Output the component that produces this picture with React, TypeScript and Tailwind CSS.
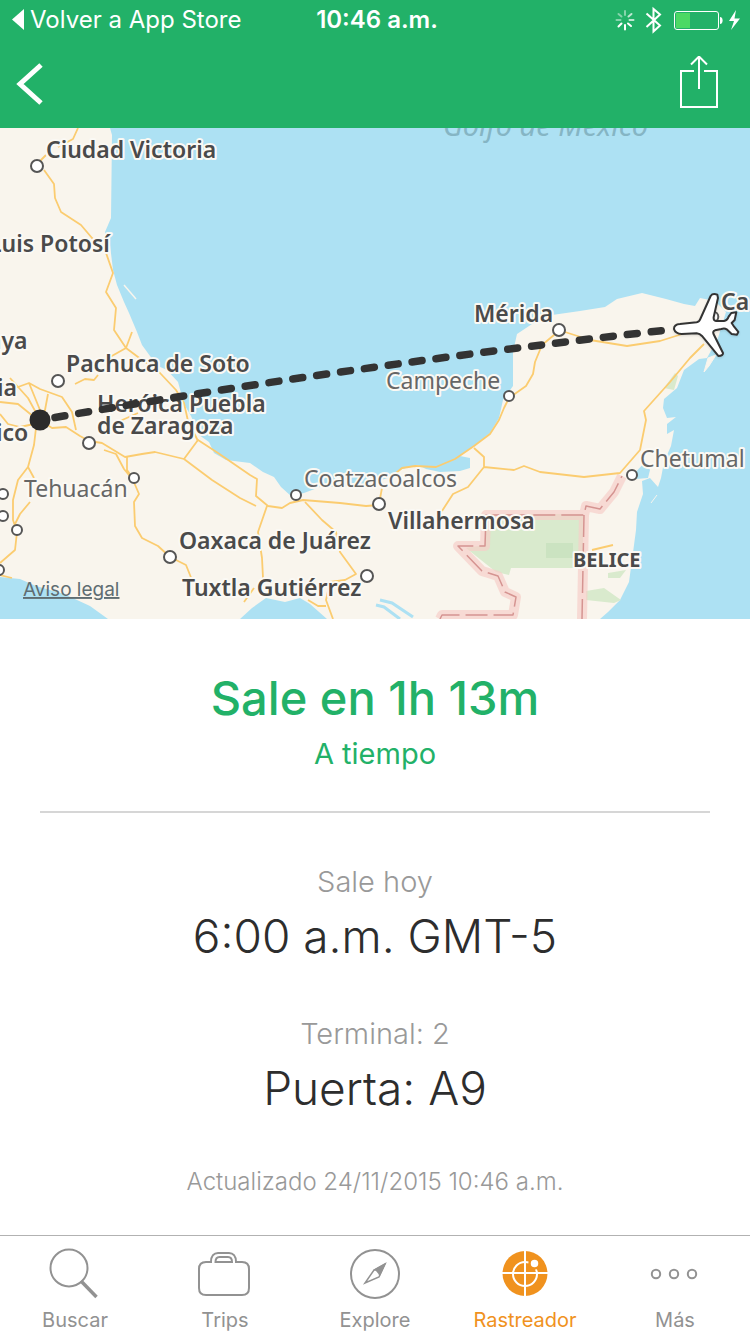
import { useState, type ReactNode } from 'react';
import clsx from 'clsx';

type CityLabel = {
  name: string;
  x: number;
  y: number;
  minor?: boolean;
};

const labels: CityLabel[] = [
  { name: 'Ciudad Victoria', x: 46, y: 158 },
  { name: 'Luis Potosí', x: -11, y: 252 },
  { name: 'aya', x: -12, y: 349 },
  { name: 'Pachuca de Soto', x: 66, y: 372 },
  { name: 'ia', x: -3, y: 396 },
  { name: 'Heróica Puebla', x: 97, y: 412 },
  { name: 'de Zaragoza', x: 97, y: 434 },
  { name: 'ico', x: -4, y: 441 },
  { name: 'Tehuacán', x: 24, y: 497, minor: true },
  { name: 'Oaxaca de Juárez', x: 179, y: 549 },
  { name: 'Tuxtla Gutiérrez', x: 182, y: 596 },
  { name: 'Coatzacoalcos', x: 304, y: 487, minor: true },
  { name: 'Villahermosa', x: 388, y: 529 },
  { name: 'Campeche', x: 386, y: 389, minor: true },
  { name: 'Mérida', x: 474, y: 322 },
  { name: 'Chetumal', x: 640, y: 467, minor: true },
  { name: 'Ca', x: 721, y: 310 },
];

// [x, y, radius]
const towns = [
  [37, 166, 6],
  [58, 381, 6],
  [89, 443, 6],
  [134, 478, 5],
  [17, 530, 5],
  [3, 494, 5],
  [3, 516, 5],
  [-1, 570, 5],
  [170, 557, 6],
  [296, 495, 5],
  [379, 504, 6],
  [367, 576, 6],
  [509, 396, 5],
  [559, 330, 6],
  [632, 475, 5],
];

const roads = [
  'M78 128 L73 139 L58 147 M46 155 L38 163 M44 170 L54 184 L55 198 L61 212 L81 225 L92 238 L105 250 L113 273 L106 292 L116 308 L114 330 L126 348 L110 357 M126 348 L132 332 M126 348 L138 357 L160 373 L176 390 L184 403 L188 421 L198 441',
  'M0 384 L18 387 L29 383 L40 389 L62 397 L72 412 L76 430 M29 383 L40 410 M0 402 L18 404 L34 417 M0 414 L8 424 L20 427 L34 424 M48 394 L45 410 L40 420 M10 378 L28 398 L40 420',
  'M40 420 L52 428 L66 427 L80 436 L89 441 L102 443 L125 457 L142 454 L155 452 L184 459 L198 440 L218 453 L250 475 L257 479 L256 496 L268 506 L282 508 L290 503 L303 500 L340 503 L366 506 L379 505',
  'M184 459 L212 480 L240 498 L256 506 M104 450 L116 454 L124 469 L133 480 L139 494 L134 502 L135 526 L142 538 L158 546 L170 557 L186 565 L192 580 M127 457 L127 470 L132 477',
  'M36 428 L34 445 L28 467 L18 480 L13 500 L13 520 L17 532 L15 550 L0 563 M28 467 L34 478 M30 502 L20 514 L14 526 M0 575 L12 578 M75 384 L85 379 L94 380 L98 375 M120 421 L138 413',
  'M267 506 L258 532 L262 558 L263 578 M305 502 L322 520 L336 532 L340 552 L356 574 L345 580 L330 582 L326 600 L333 619 M308 600 L318 606 L326 606 M254 588 L244 602',
  'M379 504 L382 488 M390 478 L402 468 L415 466 L436 467 L455 459 L474 446 L490 434 L499 420 L504 408 L509 398 L526 386 L533 374 L535 362 L542 345 L554 335 L561 332',
  'M474 448 L484 457 L484 467 L468 487 L453 494 L442 511 M484 467 L514 470 L524 466 L540 472 L584 477 L620 473 L640 450 L646 420 L644 411 L670 382 L690 358 L704 344 M565 332 L590 340 L627 346 L660 341 L698 329 M592 550 L613 545',
];

const coast =
  'M0 128 H110 L112 135 L111 218 L105 232 L110 245 L113 270 L117 285 L124 302 L129 313 L137 332 L142 345 L150 356 L158 366 L167 370 L178 382 L184 404 L191 416 L199 435 L209 442 L214 453 L226 460 L250 463 L263 472 L274 477 L281 487 L291 496 L304 493 L320 487 L360 486 L388 478 L402 469 L418 465 L426 469 L440 472 L460 471 L470 468 L470 458 L460 456 L474 446 L490 433 L499 418 L503 400 L513 386 L513 352 L517 334 L532 324 L552 315 L580 311 L605 307 L617 299 L642 293 L666 299 L684 304 L695 306 L700 298 L715 301 L726 312 L718 338 L707 358 L699 359 L684 370 L677 388 L664 399 L663 408 L667 418 L676 417 L667 424 L667 434 L674 430 L671 446 L664 462 L661 478 L658 487 L650 478 L642 481 L643 494 L637 512 L636 530 L632 560 L629 582 L620 600 L608 612 L600 619 H327 L310 604 L300 598 L285 602 L266 598 L252 608 L240 619 H108 L90 606 L64 594 L36 586 L20 579 L0 577 Z';

const border =
  'M440 619 L442 615 H513 L516 597 L505 592 L498 576 L482 571 L458 546 H485 L486 515 H584 L586 506 L600 509 L614 492 L622 476 M584 515 L582 619';

const tabs: { name: string; icon: ReactNode }[] = [
  {
    name: 'Buscar',
    icon: (
      <>
        <circle cx="22" cy="22" r="18.5" strokeWidth="2" />
        <path d="M34 35 L49.5 51" strokeWidth="3.5" />
      </>
    ),
  },
  {
    name: 'Trips',
    icon: (
      <>
        <path
          d="M14 16 H9 C4.500 16 2 18.500 2 23 V42 C2 46.500 4.500 49 9 49 H45 C49.500 49 52 46.500 52 42 V23 C52 18.500 49.500 16 45 16 H39 C39 10 36 7 32 7 H21 C17 7 14 10 14 16 Z"
          strokeWidth="2"
        />
        <path d="M18.5 16 C18.5 12.5 20 11 22.5 11 H31 C33.5 11 35 12.5 35 16 Z" strokeWidth="2" />
      </>
    ),
  },
  {
    name: 'Explore',
    icon: (
      <>
        <circle cx="28" cy="28" r="24" strokeWidth="2" />
        <path d="M38 18 L27 24 L18 37 L32 31 Z" strokeWidth="1.5" />
        <path d="M39.500 16.500 L26 24 L29 25 L31.500 28 L32.500 31 Z" fill="currentColor" stroke="none" />
      </>
    ),
  },
  {
    name: 'Rastreador',
    icon: (
      <>
        <circle cx="28" cy="27.5" r="22.5" fill="currentColor" stroke="none" />
        <circle cx="28" cy="28" r="12" stroke="#fff" strokeWidth="2" />
        <path d="M28 4 V51 M5 27 H51" stroke="#fff" strokeWidth="2" />
        <circle cx="37.5" cy="17.5" r="5" fill="#fff" strokeWidth="2.5" />
      </>
    ),
  },
  {
    name: 'Más',
    icon: (
      <>
        <circle cx="9" cy="28" r="4.2" strokeWidth="2" />
        <circle cx="27" cy="28" r="4.2" strokeWidth="2" />
        <circle cx="45" cy="28" r="4.2" strokeWidth="2" />
      </>
    ),
  },
];

function StatusBar() {
  return (
    <div className="grid h-10 grid-cols-[1fr_auto_1fr] items-center px-2.5 text-2xl leading-8 text-white">
      <a href="#app-store" className="flex items-center gap-1.5 pl-0.5">
        <svg className="h-6 w-3" viewBox="0 0 12 24" fill="currentColor">
          <path d="M12 1 V22 L0 11.5 Z" />
        </svg>
        Volver a App Store
      </a>
      <time className="pl-1 font-semibold">10:46 a.m.</time>
      <div className="flex items-center justify-end">
        <svg className="h-7 w-32" viewBox="612 6 128 28" fill="none" stroke="currentColor">
          <g strokeWidth="2" strokeLinecap="round">
            <path d="M625 11 V15 M618.5 14 L621.5 16.5 M616.5 20 H620.5" opacity=".45" />
            <path d="M631.5 14 L628.5 16.5 M629.5 20 H633.5" opacity=".7" />
            <path d="M631 26 L628 23.500 M625 25 V29.5 M618.5 26.5 L621.5 23.5" />
          </g>
          <path d="M646.5 13.5 L660 25.5 L653.5 31.5 V9 L660 14.5 L646.5 27" strokeWidth="2" />
          <rect x="674.5" y="11.5" width="44" height="18" rx="2.5" />
          <rect x="676" y="13" width="14" height="15" fill="#4cd964" stroke="none" />
          <path d="M720 17 C723.5 17 723.5 24 720 24 Z" fill="currentColor" stroke="none" />
          <path d="M736 10 L729 21 H734 L731 30 L740 18.5 H734.5 Z" fill="currentColor" stroke="none" />
        </svg>
      </div>
    </div>
  );
}

function FlightMap() {
  return (
    <svg
      className="block h-auto w-full font-['Noto_Sans',sans-serif]"
      viewBox="0 128 750 491"
      role="img"
      aria-label="Mapa del vuelo"
    >
      <rect y="128" width="750" height="491" fill="#ade1f3" />
      <path d={coast} fill="#f9f5ed" />
      <path d="M124 285 L136 299" stroke="#f9f5ed" strokeWidth="1.5" />
      <path d="M708 358 L716 355 L709 366 L704 372 Z M651 503 L657 495" fill="#f9f5ed" stroke="#f9f5ed" />
      <path d="M380 600 L392 603 L413 617 M376 605 L384 607 L400 619" stroke="#ade1f3" strokeWidth="3" fill="none" />
      <path d="M634 474 L645 462 L650 470 L648 478 L636 479 Z" fill="#ade1f3" />
      <g fill="#d9eacd">
        <path d="M487 514 H583 V568 H511 L509 575 L496 572 L466 548 L485 545 Z" />
        <path d="M546 543 H573 V558 H546 Z" fill="#cbe3c1" />
        <path d="M608 573 L626 570 L620 578 L608 578 Z M586 591 L604 588 L621 600 L614 603 L586 600 Z" />
        <path d="M664 388 L675 373 L678 376 L674 390 Z" />
      </g>
      <g fill="none" strokeLinejoin="round">
        <path d={border} stroke="#f7cfc9" strokeWidth="10" opacity=".7" />
        <path d={border} stroke="#d59491" strokeWidth="1.5" strokeDasharray="22 6" />
        {roads.map((d, i) => (
          <path key={i} d={d} stroke="#fbcc70" strokeWidth="1.8" />
        ))}
      </g>
      <g fill="#fff" stroke="#555" strokeWidth="2">
        {towns.map(([x, y, r]) => (
          <circle key={`${x}-${y}`} cx={x} cy={y} r={r} />
        ))}
      </g>
      <text x="443" y="136" fontSize="29" fontStyle="italic" fill="#85b5c4">
        Golfo de México
      </text>
      <g className="[paint-order:stroke]" stroke="#fbf9f4" strokeWidth="4" strokeLinejoin="round">
        {labels.map(({ name, x, y, minor }) => (
          <text
            key={name}
            x={x}
            y={y}
            fontSize="23"
            fontWeight={minor ? 400 : 600}
            fill={minor ? '#666' : '#4a4a4a'}
          >
            {name}
          </text>
        ))}
        <text x="573" y="567" fontSize="20" fontWeight="700" fill="#4a4a4a">
          BELICE
        </text>
      </g>
      <path
        d="M55 417.5 Q357 365 667 330"
        fill="none"
        stroke="#333"
        strokeWidth="7.5"
        strokeLinecap="round"
        strokeDasharray="10 14.1"
      />
      <circle cx="40" cy="420" r="10.5" fill="#2b2b2b" />
      <g transform="translate(500 120) scale(.3333)" strokeLinejoin="round">
        <circle cx="640" cy="590" r="15" fill="#fff" stroke="#555" strokeWidth="6" />
        <path
          className="drop-shadow-md"
          d="M522 627 Q522 613 540 612 L590 607 Q598 606 601 597 L632 528 Q638 519 652 524 L654 534 L641 592 Q640 602 648 603 L672 603 Q682 602 686 590 L694 579 L709 577 L704 600 L695 609 L703 621 L715 636 L711 644 L695 642 L680 628 Q674 624 664 627 L645 631 Q637 634 641 643 L669 699 Q670 707 655 708 L606 648 Q600 641 590 640 L545 642 Q526 641 522 627 Z"
          fill="#fff"
          stroke="#333"
          strokeWidth="6"
        />
      </g>
      <a href="#aviso-legal">
        <text x="23" y="596" fontSize="19" fill="#5f6d72" textDecoration="underline" className="font-['Inter',sans-serif]">
          Aviso legal
        </text>
      </a>
    </svg>
  );
}

function Detail({ label, value }: { label: string; value: string }) {
  return (
    <div className="flex flex-col gap-1">
      <dt className="text-[29px] leading-10 text-[#999]">{label}</dt>
      <dd className="text-[46px] leading-[60px] text-[#2d2d2d]">{value}</dd>
    </div>
  );
}

export default function App() {
  const [active, setActive] = useState('Rastreador');

  return (
    <div className="flex min-h-screen flex-col bg-white font-['Inter',sans-serif]">
      <header className="bg-[#22b168] text-white">
        <StatusBar />
        <div className="flex h-22 items-center justify-between pr-8 pl-4">
          <button type="button" aria-label="Atrás">
            <svg className="h-14 w-7" viewBox="16 56 28 56" fill="none" stroke="currentColor" strokeWidth="5">
              <path d="M41 65 L20 84 L41 103" />
            </svg>
          </button>
          <button type="button" aria-label="Compartir">
            <svg className="h-14 w-10" viewBox="678 56 40 56" fill="none" stroke="currentColor" strokeWidth="2">
              <path d="M694 71 H681 V107 H717 V71 H704 M699 57 V89 M691 64.5 L699 56.5 L707 64.5" />
            </svg>
          </button>
        </div>
      </header>

      <main className="flex-1 text-center">
        <FlightMap />
        <section className="px-10 pt-[49px]">
          <h1 className="text-[47px] leading-[60px] font-medium text-[#22b168]">Sale en 1h 13m</h1>
          <p className="mt-1.5 text-[29px] leading-10 text-[#22b168]">A tiempo</p>
          <hr className="mt-[37px] border-t-2 border-[#d6d6d6]" />
          <dl className="mt-[49px] flex flex-col gap-12 font-light">
            <Detail label="Sale hoy" value="6:00 a.m. GMT-5" />
            <Detail label="Terminal: 2" value="Puerta: A9" />
          </dl>
          <p className="mt-12 text-2xl leading-8 font-light text-[#999]">Actualizado 24/11/2015 10:46 a.m.</p>
        </section>
      </main>

      <nav className="grid grid-cols-5 border-t border-[#b2b2b2] pt-2.5 pb-0.5">
        {tabs.map(({ name, icon }) => (
          <button
            key={name}
            type="button"
            onClick={() => setActive(name)}
            className={clsx(
              'flex flex-col items-center gap-1.5',
              active === name ? 'text-[#f0921e]' : 'text-[#929292]',
            )}
          >
            <svg className="size-14" viewBox="0 0 56 56" fill="none" stroke="currentColor">
              {icon}
            </svg>
            <span className="text-xl leading-6">{name}</span>
          </button>
        ))}
      </nav>
    </div>
  );
}
